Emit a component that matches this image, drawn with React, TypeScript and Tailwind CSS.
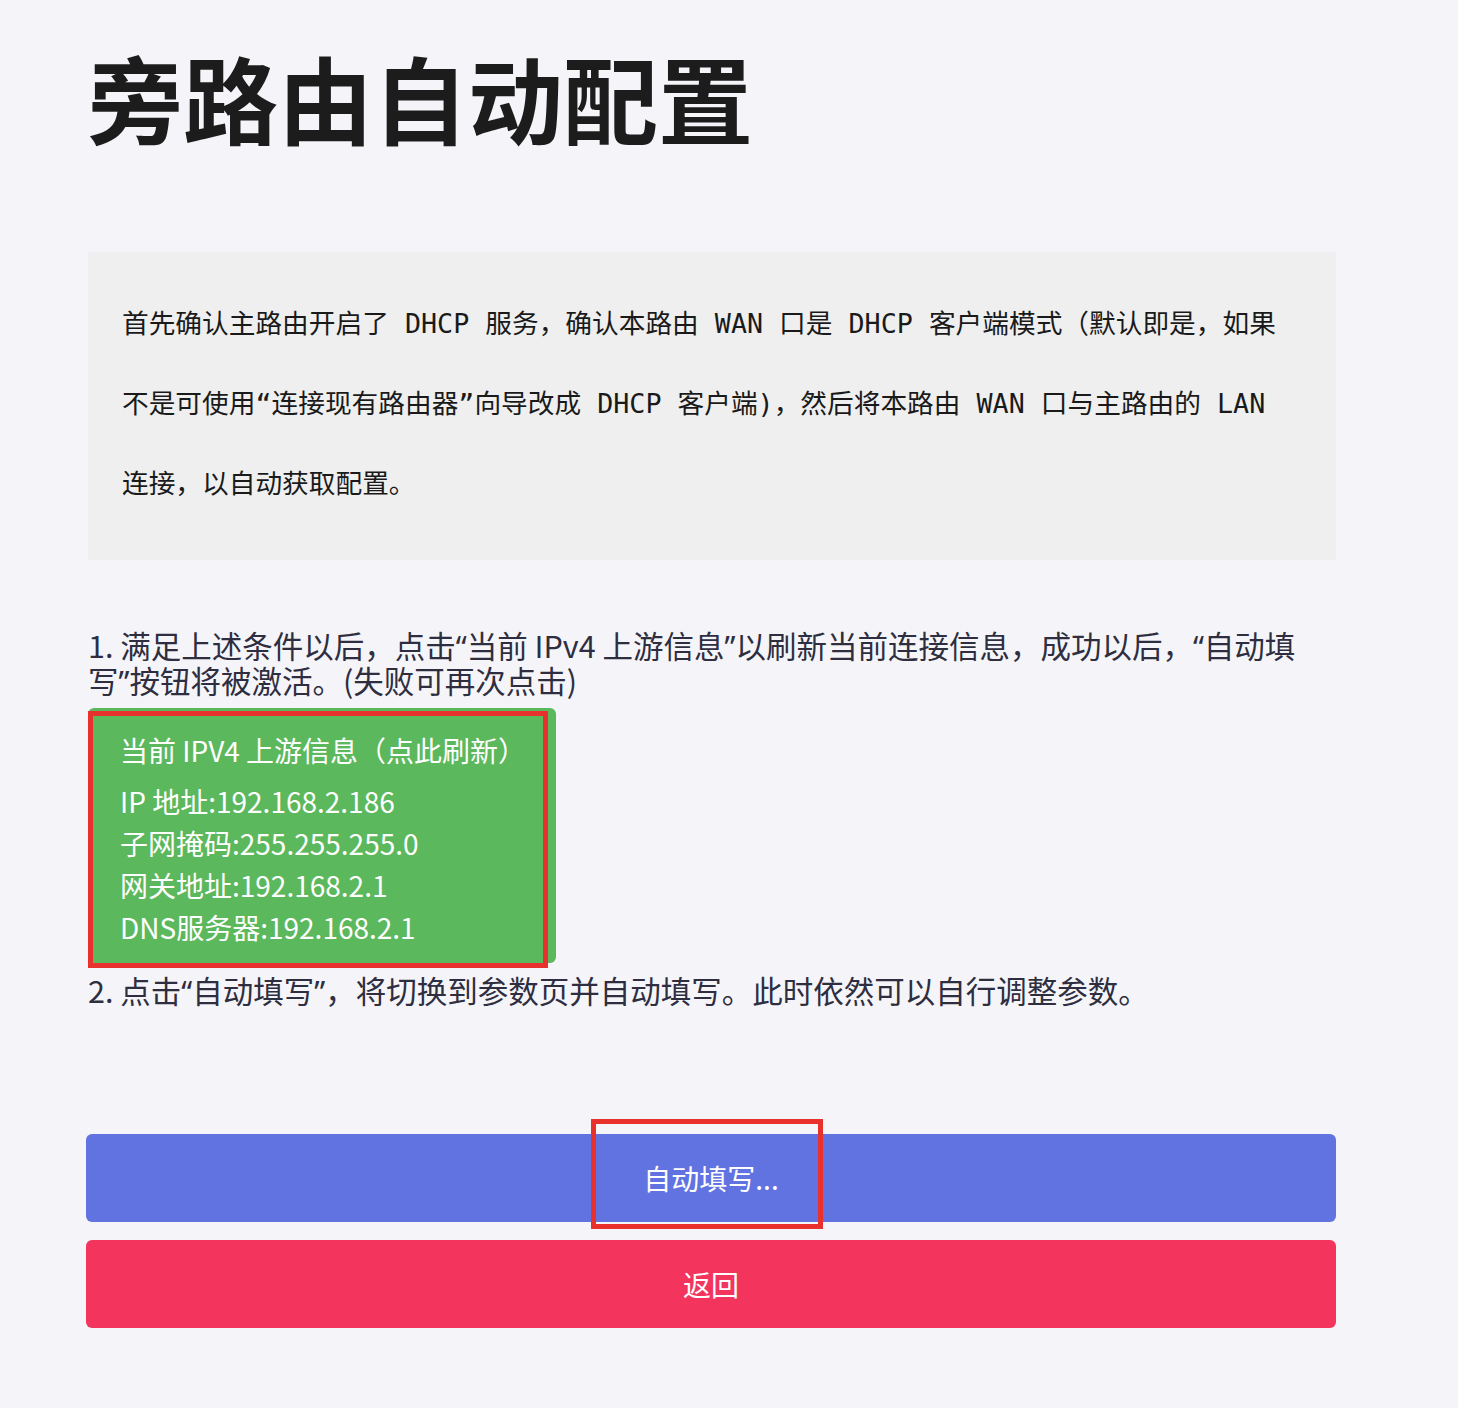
const mono = "[font-family:'DejaVu_Sans_Mono','Noto_Sans_CJK_SC',monospace]";
const sans = "[font-family:'Noto_Sans_CJK_SC','Noto_Sans',sans-serif]";

const upstream = [
  "IP 地址:192.168.2.186",
  "子网掩码:255.255.255.0",
  "网关地址:192.168.2.1",
  "DNS服务器:192.168.2.1",
];

// narrow latin-style quote marks, as the reference shows them
const Q = ({ c }: { c: string }) => (
  <span className="leading-[0px] [font-family:'Noto_Sans',sans-serif]">{c}</span>
);

export default function App() {
  return (
    <div className={`min-h-screen w-full bg-[#f5f5f9] ${sans}`}>
      <div className="w-[1250px] pl-[88px] box-content pt-[47px] pb-20">
        {/* Title */}
        <h1 className="text-[95px] leading-[100px] font-bold text-[#1c1c1c]">
          旁路由自动配置
        </h1>

        {/* Notice */}
        <div className={`mt-[105px] w-[1248px] bg-[#efefef] px-[34px] pt-[32px] pb-[36px] text-[26.7px] leading-[80px] text-[#1a1a1a] ${mono}`}>
          <div className="whitespace-nowrap">首先确认主路由开启了 DHCP 服务，确认本路由 WAN 口是 DHCP 客户端模式（默认即是，如果</div>
          <div className="whitespace-nowrap">不是可使用“连接现有路由器”向导改成 DHCP 客户端)，然后将本路由 WAN 口与主路由的 LAN</div>
          <div className="whitespace-nowrap">连接，以自动获取配置。</div>
        </div>

        {/* Steps */}
        <div className="mt-[68px] text-[30.5px] leading-[35px] text-[#2e2e40]">
          <div className="h-[35px] whitespace-nowrap">
            1. 满足上述条件以后，点击<Q c="“" />当前 IPv4 上游信息<Q c="”" />以刷新当前连接信息，成功以后，<Q c="“" />自动填
          </div>
          <div className="h-[35px] whitespace-nowrap">
            写<Q c="”" />按钮将被激活。(失败可再次点击)
          </div>
        </div>

        <div className="relative mt-[10px] w-[468px]">
          <div className="rounded-[6px] bg-[#5cb85c] pl-[32px] pt-[21px] pb-[15px] text-white">
            <div className="text-[28px] leading-[42px] mb-[9px]">当前 IPV4 上游信息（点此刷新）</div>
            {upstream.map((row) => (
              <div key={row} className="text-[28px] leading-[42px]">
                {row}
              </div>
            ))}
          </div>
          <div className="pointer-events-none absolute left-0 top-[3px] h-[257px] w-[460px] border-[5px] border-[#e8302c]" />
        </div>

        <div className="mt-[10px] h-[35px] text-[30.5px] leading-[35px] text-[#2e2e40] whitespace-nowrap">
          2. 点击<Q c="“" />自动填写<Q c="”" />，将切换到参数页并自动填写。此时依然可以自行调整参数。
        </div>

        {/* Buttons */}
        <div className="mt-[126px] -ml-[2px] flex w-[1250px] flex-col gap-[18px]">
          <div className="relative">
            <button className="flex h-[88px] w-full items-center justify-center rounded-[6px] bg-[#6172e1] text-[28px] text-white">
              自动填写...
            </button>
            <div className="pointer-events-none absolute left-[505px] top-[-15px] h-[110px] w-[232px] border-[5px] border-[#e8302c]" />
          </div>
          <button className="flex h-[88px] w-full items-center justify-center rounded-[6px] bg-[#f3345d] text-[28px] text-white">
            返回
          </button>
        </div>
      </div>
    </div>
  );
}
